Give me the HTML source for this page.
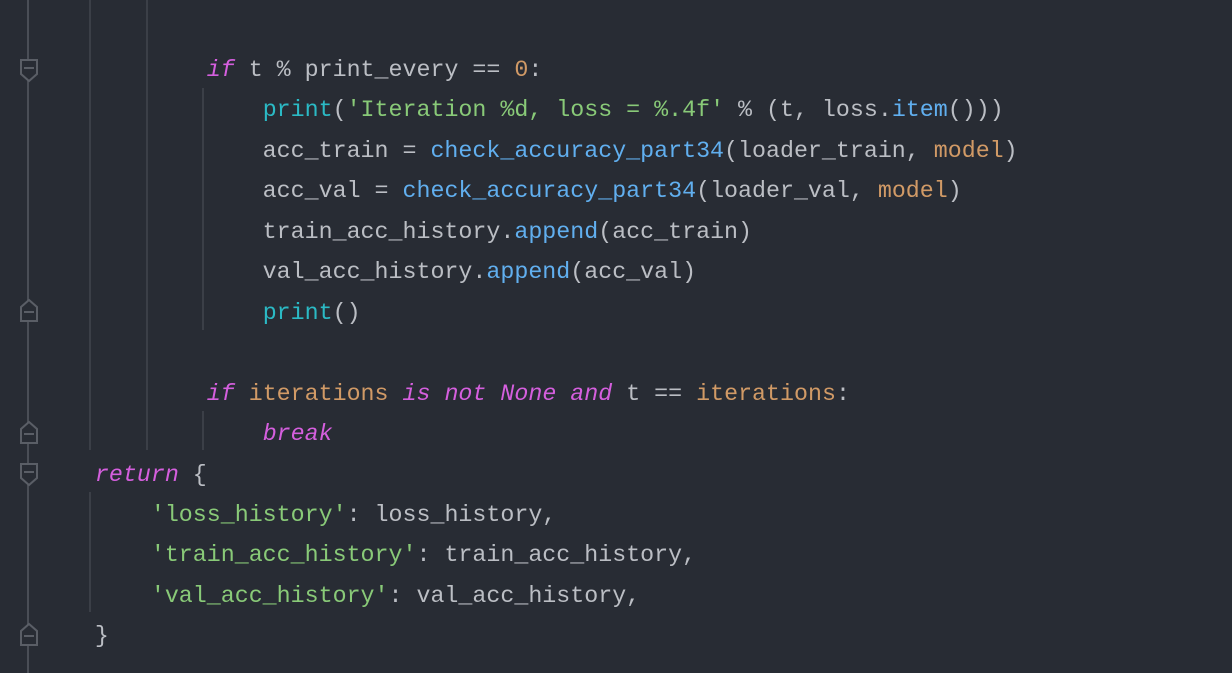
<!DOCTYPE html>
<html><head><style>
html,body{margin:0;padding:0;background:#282c34;width:1232px;height:673px;overflow:hidden;}
#code{position:absolute;left:39px;top:50px;font-family:"Liberation Mono",monospace;font-size:23.3px;line-height:40.45px;color:#bbbec4;white-space:pre;}
.k{color:#d55fde;font-style:italic}
.s{color:#89ca78}
.c{color:#2bbac5}
.f{color:#61afef}
.o{color:#d19a66}
.g{position:absolute;width:2px;background:#3b3f47;}
</style></head><body>
<div class="g" style="left:27px;top:0;height:673px;background:#4a4e56"></div>
<div class="g" style="left:89px;top:0;height:450px"></div>
<div class="g" style="left:146px;top:0;height:450px"></div>
<div class="g" style="left:202px;top:88px;height:242px"></div>
<div class="g" style="left:202px;top:411px;height:39px"></div>
<div class="g" style="left:89px;top:492px;height:120px"></div>
<svg style="position:absolute;left:0;top:0" width="60" height="673">
<g fill="#282c34" stroke="#5a5e66" stroke-width="2">
<path d="M21 60h16v14l-8 7l-8-7z"/><path d="M24 68h10"/>
<path d="M21 464h16v14l-8 7l-8-7z"/><path d="M24 472h10"/>
<path d="M21 321h16v-14l-8-7l-8 7z"/><path d="M24 312h10"/>
<path d="M21 443h16v-14l-8-7l-8 7z"/><path d="M24 434h10"/>
<path d="M21 645h16v-14l-8-7l-8 7z"/><path d="M24 636h10"/>
</g></svg>
<div id="code">            <span class="k">if</span> t % print_every == <span class="o">0</span>:
                <span class="c">print</span>(<span class="s">'Iteration %d, loss = %.4f'</span> % (t, loss.<span class="f">item</span>()))
                acc_train = <span class="f">check_accuracy_part34</span>(loader_train, <span class="o">model</span>)
                acc_val = <span class="f">check_accuracy_part34</span>(loader_val, <span class="o">model</span>)
                train_acc_history.<span class="f">append</span>(acc_train)
                val_acc_history.<span class="f">append</span>(acc_val)
                <span class="c">print</span>()

            <span class="k">if</span> <span class="o">iterations</span> <span class="k">is not None and</span> t == <span class="o">iterations</span>:
                <span class="k">break</span>
    <span class="k">return</span> {
        <span class="s">'loss_history'</span>: loss_history,
        <span class="s">'train_acc_history'</span>: train_acc_history,
        <span class="s">'val_acc_history'</span>: val_acc_history,
    }</div>
</body></html>
